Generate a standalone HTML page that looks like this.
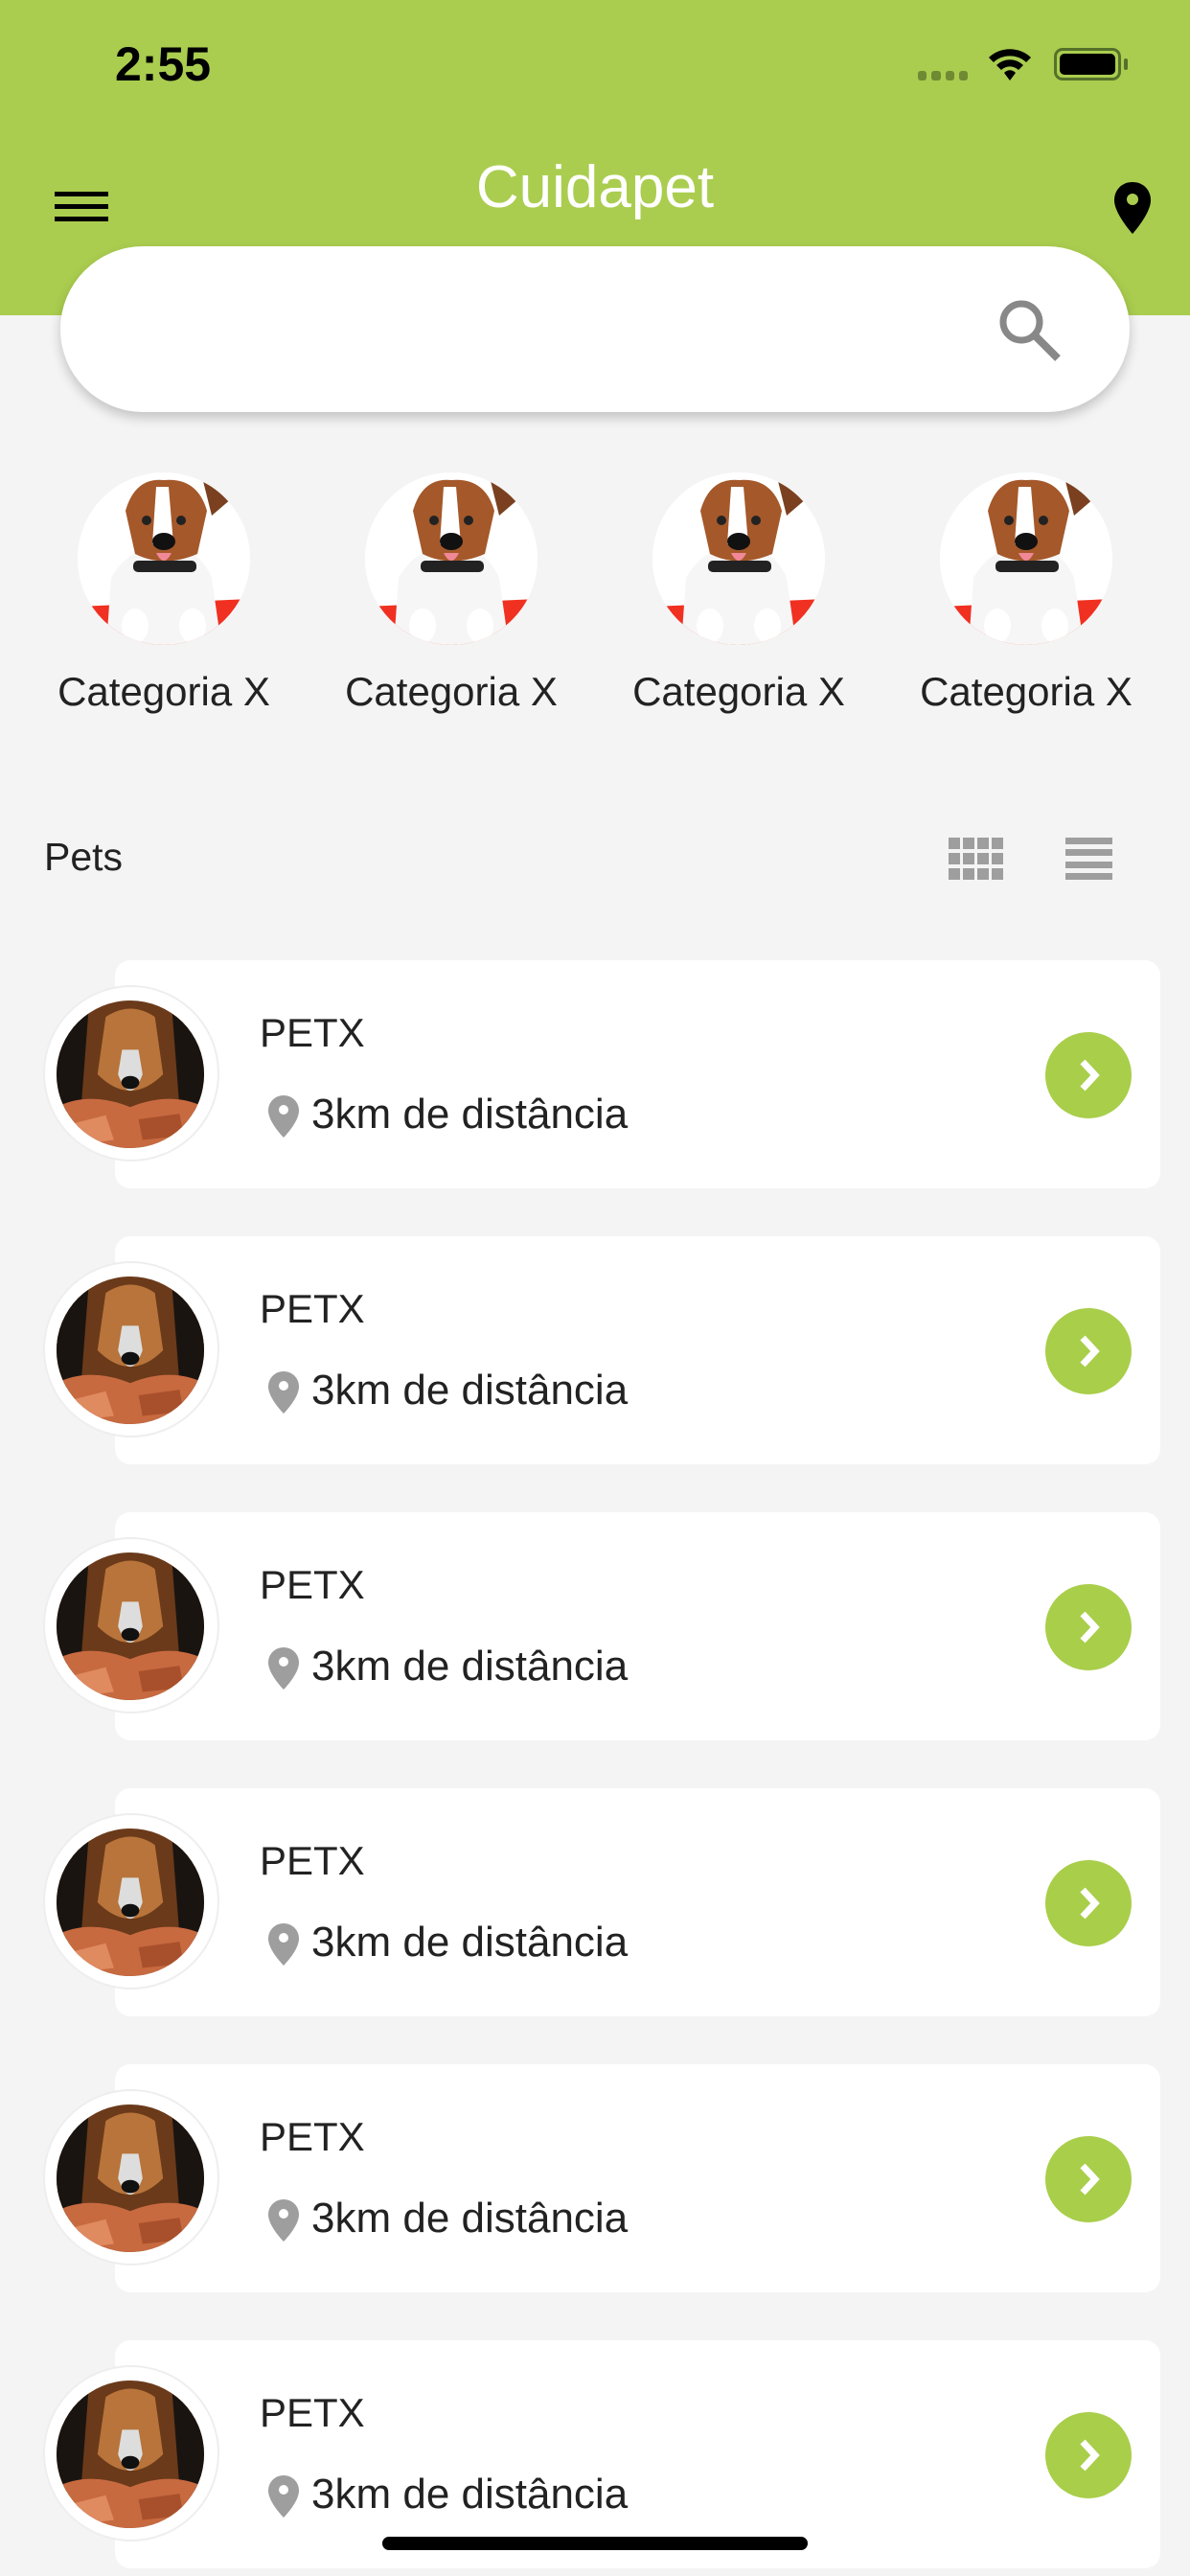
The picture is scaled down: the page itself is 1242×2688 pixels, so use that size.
<!DOCTYPE html>
<html><head><meta charset="utf-8"><style>
*{margin:0;padding:0;box-sizing:border-box}
body{width:1242px;height:2688px;background:#f4f4f4;font-family:"Liberation Sans",sans-serif;position:relative;overflow:hidden;color:#222}
.hdr{position:absolute;left:0;top:0;width:1242px;height:329px;background:#aacd4f}
.abs{position:absolute}
.search{left:63px;top:257px;width:1116px;height:173px;background:#fff;border-radius:87px;box-shadow:0 6px 12px rgba(0,0,0,.2)}
.cat{position:absolute;top:493px;width:180px;height:180px;border-radius:50%;overflow:hidden;background:#fff}
.catl{position:absolute;top:698px;font-size:42px;width:300px;text-align:center;color:#222}
.card{position:absolute;left:120px;width:1091px;height:238px;background:#fff;border-radius:16px}
.av{position:absolute;left:45px;width:184px;height:184px;border-radius:50%;background:#fff;border:2px solid #eee}
.av svg{position:absolute;left:12px;top:14px}
.pn{position:absolute;left:271px;font-size:42px;color:#222}
.ds{position:absolute;left:325px;font-size:44px;color:#222}
.btn{position:absolute;left:1091px;width:90px;height:90px;border-radius:50%;background:#a9ce4a}
</style></head><body>
<div class="hdr"></div>
<div class="abs" style="left:120px;top:38px;font-size:50px;font-weight:bold;color:#000">2:55</div>
<div class="abs" style="left:958px;top:74px;width:52px;height:10px;display:flex;gap:5px"><i style="flex:1;background:#6f8a33;border-radius:3px"></i><i style="flex:1;background:#6f8a33;border-radius:3px"></i><i style="flex:1;background:#6f8a33;border-radius:3px"></i><i style="flex:1;background:#6f8a33;border-radius:3px"></i></div>
<svg class="abs" style="left:1030px;top:48px" width="48" height="38" viewBox="0 0 48 38"><path d="M2 12 A32 32 0 0 1 46 12 L41 17 A25 25 0 0 0 7 17Z M10 20 A20 20 0 0 1 38 20 L33 25 A13 13 0 0 0 15 25Z M18 28 A8 8 0 0 1 30 28 L24 36Z" fill="#000"/></svg>
<div class="abs" style="left:1100px;top:50px;width:70px;height:34px;border:3px solid #55702a;border-radius:9px;padding:3px"><div style="width:100%;height:100%;background:#000;border-radius:5px"></div></div>
<div class="abs" style="left:1173px;top:61px;width:4px;height:12px;background:#55702a;border-radius:2px"></div>
<div class="abs" style="left:0;width:1242px;top:160px;text-align:center;font-size:62px;color:#fff">Cuidapet</div>
<div class="abs" style="left:57px;top:200px;width:56px;height:5px;background:#000"></div>
<div class="abs" style="left:57px;top:213px;width:56px;height:5px;background:#000"></div>
<div class="abs" style="left:57px;top:226px;width:56px;height:5px;background:#000"></div>
<svg class="abs" style="left:1160px;top:188px" width="44" height="58" viewBox="0 0 44 58"><path d="M22 2C11 2 3 10 3 21c0 14 19 35 19 35s19-21 19-35C41 10 33 2 22 2z" fill="#000"/><circle cx="22" cy="20" r="6" fill="#aacd4f"/></svg>
<div class="abs search"></div>
<svg class="abs" style="left:1040px;top:310px" width="70" height="70" viewBox="0 0 70 70"><circle cx="26" cy="26" r="19" stroke="#888" stroke-width="7" fill="none"/><path d="M40 40 L64 64" stroke="#888" stroke-width="8"/></svg>

<svg width="0" height="0" style="position:absolute"><defs>
<g id="jr"><rect width="180" height="180" fill="#fff"/><path d="M0 140 L180 132 L180 180 L0 180Z" fill="#f03020"/><path d="M30 180 L35 110 Q55 75 90 80 Q125 75 140 110 L150 180Z" fill="#f6f6f6"/><path d="M50 40 Q60 5 90 8 Q125 5 135 40 L125 85 Q90 100 60 85Z" fill="#a5582a"/><path d="M82 15 L95 15 L100 75 L78 75Z" fill="#fff"/><path d="M130 5 L175 15 L140 45Z" fill="#7a4020"/><circle cx="72" cy="50" r="5" fill="#222"/><circle cx="108" cy="50" r="5" fill="#222"/><ellipse cx="90" cy="72" rx="12" ry="9" fill="#111"/><path d="M82 84 Q90 100 98 84Z" fill="#f08898"/><rect x="58" y="92" width="66" height="12" rx="5" fill="#222"/><ellipse cx="60" cy="160" rx="14" ry="18" fill="#fff"/><ellipse cx="120" cy="160" rx="14" ry="18" fill="#fff"/></g>
<g id="cl"><rect width="180" height="180" fill="#6a3a1a"/><path d="M0 0 L40 0 L30 130 L0 140Z" fill="#1a1410"/><path d="M140 0 L180 0 L180 140 L150 130Z" fill="#1a1410"/><path d="M60 20 Q90 0 120 20 L130 90 Q90 130 50 90Z" fill="#b8743a"/><path d="M75 90 Q90 130 105 90 L100 60 L80 60Z" fill="#ddd"/><ellipse cx="90" cy="100" rx="11" ry="8" fill="#111"/><path d="M0 130 Q40 110 90 130 Q140 110 180 130 L180 180 L0 180Z" fill="#c86a40"/><path d="M20 150 L60 140 L70 170 L30 175Z" fill="#e08a60"/><path d="M100 145 L150 138 L155 165 L105 170Z" fill="#a8502c"/></g>
</defs></svg>
<div class="cat" style="left:81px"><svg width="180" height="180"><use href="#jr"/></svg></div>
<div class="cat" style="left:381px"><svg width="180" height="180"><use href="#jr"/></svg></div>
<div class="cat" style="left:681px"><svg width="180" height="180"><use href="#jr"/></svg></div>
<div class="cat" style="left:981px"><svg width="180" height="180"><use href="#jr"/></svg></div>
<div class="catl" style="left:21px">Categoria X</div>
<div class="catl" style="left:321px">Categoria X</div>
<div class="catl" style="left:621px">Categoria X</div>
<div class="catl" style="left:921px">Categoria X</div>

<div class="abs" style="left:46px;top:871px;font-size:41px;color:#222">Pets</div>
<svg class="abs" style="left:990px;top:874px" width="57" height="44" viewBox="0 0 57 44"><g fill="#9e9e9e"><rect x="0" y="0" width="12" height="12"/><rect x="15" y="0" width="12" height="12"/><rect x="30" y="0" width="12" height="12"/><rect x="45" y="0" width="12" height="12"/><rect x="0" y="16" width="12" height="12"/><rect x="15" y="16" width="12" height="12"/><rect x="30" y="16" width="12" height="12"/><rect x="45" y="16" width="12" height="12"/><rect x="0" y="32" width="12" height="12"/><rect x="15" y="32" width="12" height="12"/><rect x="30" y="32" width="12" height="12"/><rect x="45" y="32" width="12" height="12"/></g></svg>
<svg class="abs" style="left:1112px;top:874px" width="49" height="44" viewBox="0 0 49 44"><g fill="#9e9e9e"><rect y="0" width="49" height="7"/><rect y="12" width="49" height="7"/><rect y="25" width="49" height="7"/><rect y="37" width="49" height="7"/></g></svg>

<div id="cards"></div>
<script>
var h='';
for(var i=0;i<6;i++){var t=1002+i*288;
h+='<div class="card" style="top:'+t+'px"></div>'+
'<div class="av" style="top:'+(t+26)+'px"><svg width="154" height="154" viewBox="0 0 180 180"><clipPath id="c'+i+'"><circle cx="90" cy="90" r="90"/></clipPath><g clip-path="url(#c'+i+')"><use href="#cl"/></g></svg></div>'+
'<div class="pn" style="top:'+(t+52)+'px">PETX</div>'+
'<svg class="abs" style="left:279px;top:'+(t+140)+'px" width="34" height="46" viewBox="0 0 34 46"><path d="M17 1C8 1 1 8 1 17c0 12 16 28 16 28s16-16 16-28C33 8 26 1 17 1z" fill="#9e9e9e"/><circle cx="17" cy="16" r="5" fill="#fff"/></svg>'+
'<div class="ds" style="top:'+(t+136)+'px">3km de distância</div>'+
'<div class="btn" style="top:'+(t+75)+'px"><svg width="90" height="90" viewBox="0 0 90 90"><path d="M39 31 L52 45 L39 59" stroke="#fff" stroke-width="7" fill="none"/></svg></div>';}
document.getElementById('cards').innerHTML=h;
</script>
<div class="abs" style="left:399px;top:2647px;width:444px;height:14px;background:#000;border-radius:7px"></div>
</body></html>
